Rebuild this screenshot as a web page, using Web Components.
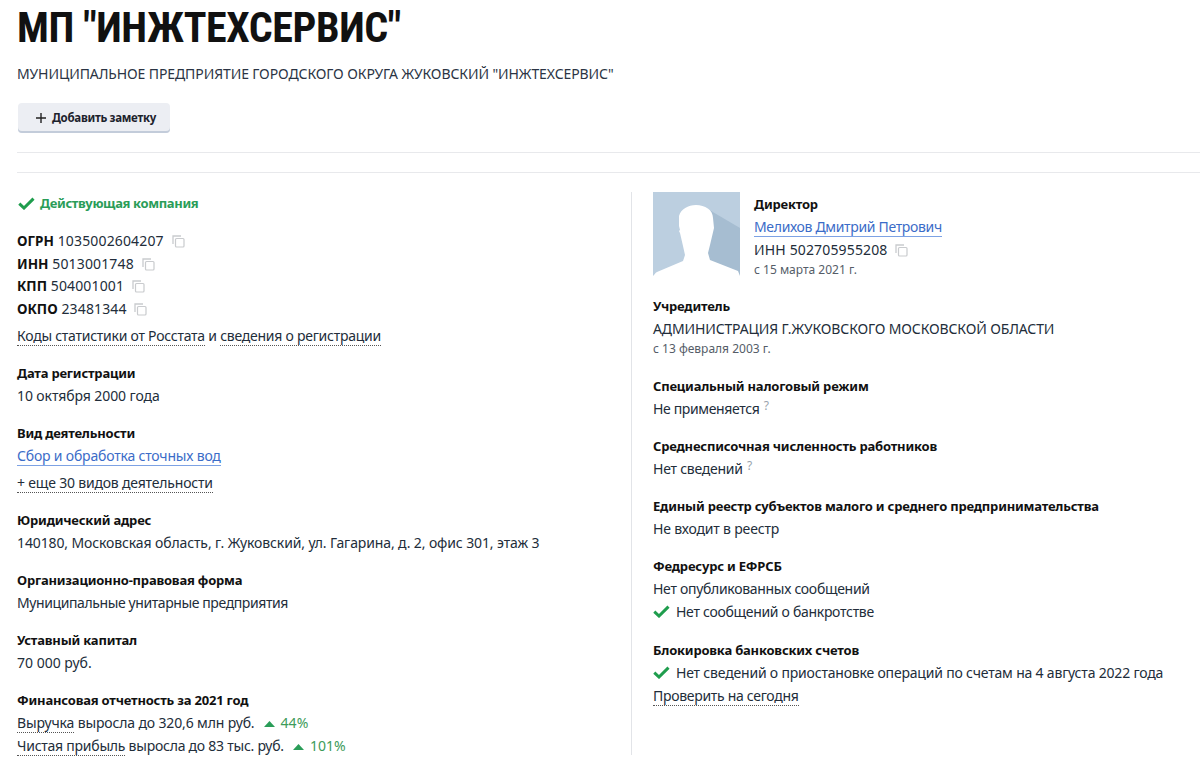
<!DOCTYPE html>
<html lang="ru">
<head>
<meta charset="utf-8">
<title>МП "ИНЖТЕХСЕРВИС"</title>
<style>
html,body{margin:0;padding:0;background:#fff;overflow:hidden;height:760px}
body{font:14px/23px "Noto Sans","Open Sans",sans-serif;color:#222d3a;letter-spacing:-.25px}
</style>
</head>
<body>
<company-page>
  <company-head slot="head">
    <span slot="title">МП "ИНЖТЕХСЕРВИС"</span>
    <span slot="full">МУНИЦИПАЛЬНОЕ ПРЕДПРИЯТИЕ ГОРОДСКОГО ОКРУГА ЖУКОВСКИЙ "ИНЖТЕХСЕРВИС"</span>
    <span slot="btn">Добавить заметку</span>
  </company-head>

  <div slot="left">
    <status-line>Действующая компания</status-line>
    <code-row label="ОГРН" value="1035002604207" style="margin-top:14px"></code-row>
    <code-row label="ИНН" value="5013001748"></code-row>
    <code-row label="КПП" value="504001001"></code-row>
    <code-row label="ОКПО" value="23481344"></code-row>
    <info-block gap="4">
      <dot-link>Коды статистики от Росстата</dot-link> и <dot-link>сведения о регистрации</dot-link>
    </info-block>
    <info-block title="Дата регистрации" gap="15" style="letter-spacing:-.1px">10 октября 2000 года</info-block>
    <info-block title="Вид деятельности" gap="15" style="letter-spacing:-.19px">
      <blue-link>Сбор и обработка сточных вод</blue-link>
      <div style="margin-top:4px"><dot-link>+ еще 30 видов деятельности</dot-link></div>
    </info-block>
    <info-block title="Юридический адрес" gap="15" style="letter-spacing:-.12px">140180, Московская область, г. Жуковский, ул. Гагарина, д. 2, офис 301, этаж 3</info-block>
    <info-block title="Организационно-правовая форма" gap="15" style="letter-spacing:-.4px">Муниципальные унитарные предприятия</info-block>
    <info-block title="Уставный капитал" gap="15" style="letter-spacing:0">70 000 руб.</info-block>
    <info-block title="Финансовая отчетность за 2021 год" gap="15" style="letter-spacing:-.14px">
      <div><dot-link>Выручка</dot-link> выросла до 320,6 млн руб. <grow-mark>44%</grow-mark></div>
      <div style="letter-spacing:-.24px"><dot-link>Чистая прибыль</dot-link> выросла до 83 тыс. руб. <grow-mark>101%</grow-mark></div>
    </info-block>
  </div>

  <div slot="right">
    <person-card>
      <span slot="role">Директор</span>
      <blue-link slot="name" style="letter-spacing:-.33px">Мелихов Дмитрий Петрович</blue-link>
      <code-row slot="inn" value="ИНН 502705955208"></code-row>
      <span slot="since">с 15 марта 2021 г.</span>
    </person-card>
    <info-block title="Учредитель" gap="16" style="letter-spacing:-.13px">
      АДМИНИСТРАЦИЯ Г.ЖУКОВСКОГО МОСКОВСКОЙ ОБЛАСТИ
      <small-note>с 13 февраля 2003 г.</small-note>
    </info-block>
    <info-block title="Специальный налоговый режим" gap="17" style="letter-spacing:-.35px">Не применяется <hint-mark></hint-mark></info-block>
    <info-block title="Среднесписочная численность работников" gap="15">Нет сведений <hint-mark></hint-mark></info-block>
    <info-block title="Единый реестр субъектов малого и среднего предпринимательства" gap="15" style="letter-spacing:-.17px">Не входит в реестр</info-block>
    <info-block title="Федресурс и ЕФРСБ" gap="15" style="letter-spacing:-.3px">
      Нет опубликованных сообщений
      <ok-line>Нет сообщений о банкротстве</ok-line>
    </info-block>
    <info-block title="Блокировка банковских счетов" gap="16" style="letter-spacing:-.19px">
      <ok-line>Нет сведений о приостановке операций по счетам на 4 августа 2022 года</ok-line>
      <dot-link style="letter-spacing:-.3px;margin-top:-1px">Проверить на сегодня</dot-link>
    </info-block>
  </div>
</company-page>

<script>
function shadow(el, html){
  el.attachShadow({mode:"open"}).innerHTML = html;
}
const checkSvg = `<svg width="17" height="13" viewBox="0 0 17 13"><path d="M1.3 6.6 L6 11 L15.5 1.6" fill="none" stroke="#1f9d4d" stroke-width="3"/></svg>`;

class CompanyPage extends HTMLElement{
  constructor(){
    super();
    shadow(this, `<style>
      :host{display:block;padding-left:17px}
      .cols{display:grid;grid-template-columns:614px 1fr;margin-top:19px}
      .right{border-left:1px solid #e2e4e8;padding-left:21px;height:563px}
    </style>
    <slot name="head"></slot>
    <div class="cols">
      <div class="left"><slot name="left"></slot></div>
      <div class="right"><slot name="right"></slot></div>
    </div>`);
  }
}
class CompanyHead extends HTMLElement{
  constructor(){
    super();
    shadow(this, `<style>
      :host{display:block;letter-spacing:0}
      h1{margin:0;font:700 42px/56px "Liberation Sans Narrow","Roboto Condensed",Roboto,sans-serif;color:#111;height:52px;letter-spacing:-.4px}
      .full{margin-top:10px;font-size:14px;line-height:24px;color:#2b3444;height:24px;letter-spacing:-.1px}
      button{display:flex;align-items:center;gap:5px;margin:17px 0 0 1px;width:152px;height:30px;padding:0 0 0 17px;border:0;border-radius:4px;
        background:#eceef3;box-shadow:inset 0 -2px 0 #c3ccda;font:700 11.5px/16px "Noto Sans",sans-serif;color:#1c222c;letter-spacing:-.3px}
      .rule{border-top:1px solid #e8e9ec}
      .r1{margin-top:19px}
      .r2{margin-top:19px}
    </style>
    <h1><slot name="title"></slot></h1>
    <div class="full"><slot name="full"></slot></div>
    <button><svg width="12" height="12" viewBox="0 0 12 12"><path d="M6 1v10M1 6h10" stroke="#222" stroke-width="1.4"/></svg><slot name="btn"></slot></button>
    <div class="rule r1"></div>
    <div class="rule r2"></div>`);
  }
}
class StatusLine extends HTMLElement{
  constructor(){
    super();
    shadow(this, `<style>
      :host{display:flex;align-items:center;gap:5px;height:23px;font-weight:700;font-size:13px;color:#2a9d58;padding-left:1px;letter-spacing:-.35px}
    </style>${checkSvg}<slot></slot>`);
  }
}
class CodeRow extends HTMLElement{
  constructor(){
    super();
    const label = this.getAttribute("label");
    shadow(this, `<style>
      :host{display:block;height:22.7px;line-height:23px;color:#222d3a;letter-spacing:.15px}
      b{color:#111;font-size:13.5px;letter-spacing:0}
      svg{vertical-align:-2px;margin-left:4px}
    </style>${label ? `<b>${label}</b> ` : ""}${this.getAttribute("value")}
    <svg width="13" height="13" viewBox="0 0 13 13"><path d="M1 9V1h8" fill="none" stroke="#c9cbce" stroke-width="1.3"/><rect x="3.5" y="3.5" width="8.5" height="8.5" rx="1" fill="#fff" stroke="#c9cbce" stroke-width="1.2"/></svg>`);
  }
}
class InfoBlock extends HTMLElement{
  constructor(){
    super();
    const title = this.getAttribute("title");
    shadow(this, `<style>
      :host{display:block;margin-top:${this.getAttribute("gap") || 15}px}
      .t{font-weight:700;font-size:13px;color:#111;height:22px;letter-spacing:-.2px}
    </style>${title ? `<div class="t">${title}</div>` : ""}<slot></slot>`);
  }
}
class DotLink extends HTMLElement{
  constructor(){
    super();
    shadow(this, `<style>
      :host{display:inline-block;line-height:18px;border-bottom:1px dotted #555}
    </style><slot></slot>`);
  }
}
class BlueLink extends HTMLElement{
  constructor(){
    super();
    shadow(this, `<style>
      :host{display:inline-block;line-height:18px;color:#3b6cc8;border-bottom:1px solid #7da2e4}
    </style><slot></slot>`);
  }
}
class GrowMark extends HTMLElement{
  constructor(){
    super();
    shadow(this, `<style>
      :host{display:inline-block;color:#3d9b5a;margin-left:6px;letter-spacing:0}
      svg{margin-right:2px;vertical-align:1px}
    </style><svg width="11" height="6" viewBox="0 0 11 6"><path d="M5.5 0L11 6H0z" fill="#2a9d58"/></svg> <slot></slot>`);
  }
}
class HintMark extends HTMLElement{
  constructor(){
    super();
    shadow(this, `<style>
      :host{display:inline-block;font-size:12px;color:#9aa3ae;vertical-align:4px;line-height:10px;margin-left:1px}
    </style>?`);
  }
}
class SmallNote extends HTMLElement{
  constructor(){
    super();
    shadow(this, `<style>
      :host{display:block;font-size:12px;line-height:18px;color:#555d68;letter-spacing:0}
    </style><slot></slot>`);
  }
}
class OkLine extends HTMLElement{
  constructor(){
    super();
    shadow(this, `<style>
      :host{display:flex;align-items:center;gap:6px;height:23px}
    </style>${checkSvg}<span><slot></slot></span>`);
  }
}
class PersonCard extends HTMLElement{
  constructor(){
    super();
    shadow(this, `<style>
      :host{display:flex;gap:14px;height:87px}
      .ph{width:87px;height:87px;flex:none;display:block}
      .role{font-weight:700;font-size:13px;color:#111;height:22px;padding-top:1px;letter-spacing:-.2px}
      .name{height:23px}
      .since{font-size:12px;line-height:18px;color:#555d68;letter-spacing:0}
    </style>
    <svg class="ph" viewBox="0 0 87 87">
      <rect width="87" height="87" fill="#bccfe0"/>
      <path d="M53 16L87 36V87H50z" fill="#a6bdd1"/>
      <path d="M0 87V84C2 82 2 81 4 80L30 69L32 63L30 54L27 41L26 39L27 38L26 34V24C28 17 35 13 43 13C52 13 60 18 60 26L61 36L57 53L55 61L57 68L85 79L87 84V87z" fill="#fff"/>
    </svg>
    <div class="info">
      <div class="role"><slot name="role"></slot></div>
      <div class="name"><slot name="name"></slot></div>
      <slot name="inn"></slot>
      <div class="since"><slot name="since"></slot></div>
    </div>`);
  }
}
customElements.define("company-page", CompanyPage);
customElements.define("company-head", CompanyHead);
customElements.define("status-line", StatusLine);
customElements.define("code-row", CodeRow);
customElements.define("info-block", InfoBlock);
customElements.define("dot-link", DotLink);
customElements.define("blue-link", BlueLink);
customElements.define("grow-mark", GrowMark);
customElements.define("hint-mark", HintMark);
customElements.define("small-note", SmallNote);
customElements.define("ok-line", OkLine);
customElements.define("person-card", PersonCard);
</script>
</body>
</html>
